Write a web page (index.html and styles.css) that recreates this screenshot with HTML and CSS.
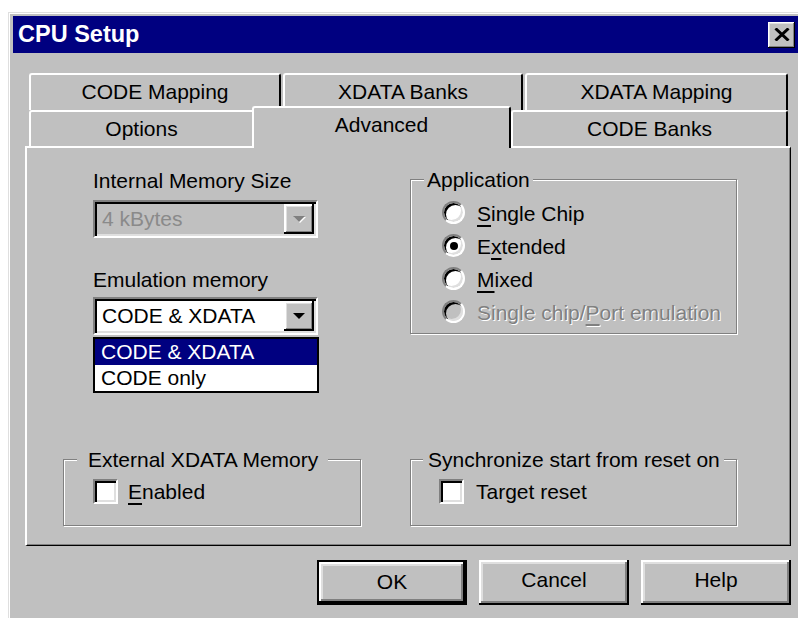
FILE: index.html
```html
<!DOCTYPE html>
<html>
<head>
<meta charset="utf-8">
<title>CPU Setup</title>
<link rel="stylesheet" href="styles.css">
</head>
<body>
<div class="dialog">
  <div class="titlebar">
    <span class="title">CPU Setup</span>
    <button class="close-btn" type="button" aria-label="Close">
      <svg width="16" height="13" viewBox="0 0 16 13"><path d="M1.5 0.5 L14.5 12.5 M14.5 0.5 L1.5 12.5" stroke="#000" stroke-width="3" fill="none"/></svg>
    </button>
  </div>

  <div class="tabs">
    <div class="tab-row back">
      <div class="tab tab-code-map">CODE Mapping</div>
      <div class="tab tab-xdata-banks">XDATA Banks</div>
      <div class="tab tab-xdata-map">XDATA Mapping</div>
    </div>
    <div class="tab-row front">
      <div class="tab tab-options">Options</div>
      <div class="tab tab-advanced active">Advanced</div>
      <div class="tab tab-code-banks">CODE Banks</div>
    </div>
  </div>

  <div class="panel">
    <div class="panel-row top">
      <div class="memory-col">
        <div class="field-label">Internal Memory Size</div>
        <div class="combo disabled">
          <span class="combo-value">4 kBytes</span>
          <span class="combo-btn"><span class="arrow"></span></span>
        </div>
        <div class="field-label second">Emulation memory</div>
        <div class="combo open">
          <span class="combo-value">CODE &amp; XDATA</span>
          <span class="combo-btn"><span class="arrow"></span></span>
          <ul class="combo-list">
            <li class="selected">CODE &amp; XDATA</li>
            <li>CODE only</li>
          </ul>
        </div>
      </div>

      <div class="group application">
        <div class="group-label">Application</div>
        <div class="option"><span class="radio"></span><span><u>S</u>ingle Chip</span></div>
        <div class="option"><span class="radio checked"></span><span>E<u>x</u>tended</span></div>
        <div class="option"><span class="radio"></span><span><u>M</u>ixed</span></div>
        <div class="option disabled"><span class="radio"></span><span>Single chip/<u>P</u>ort emulation</span></div>
      </div>
    </div>

    <div class="panel-row bottom">
      <div class="group external">
        <div class="group-label">External XDATA Memory</div>
        <div class="check-row"><span class="checkbox"></span><span><u>E</u>nabled</span></div>
      </div>
      <div class="group sync">
        <div class="group-label">Synchronize start from reset on</div>
        <div class="check-row"><span class="checkbox"></span><span>Target reset</span></div>
      </div>
    </div>
  </div>

  <div class="buttons">
    <button class="btn default" type="button">OK</button>
    <button class="btn" type="button">Cancel</button>
    <button class="btn" type="button">Help</button>
  </div>
</div>
</body>
</html>
```
FILE: styles.css
```css
* {
  box-sizing: border-box;
}

html,
body {
  margin: 0;
  padding: 0;
}

body {
  background: #fff;
  padding: 12px 0 0 8px;
  height: 618px;
  overflow: hidden;
  font-family: "Liberation Sans", Arial, sans-serif;
  font-size: 21px;
  color: #000;
}

/* Window frame */
.dialog {
  width: 800px;
  height: 620px;
  background: #c0c0c0;
  border-top: 1px solid #dfdfdf;
  border-left: 1px solid #dfdfdf;
  box-shadow: inset 1px 1px 0 #fff;
  padding: 3px 0 0 4px;
}

.titlebar {
  display: flex;
  align-items: center;
  justify-content: space-between;
  height: 37px;
  background: #000080;
  padding: 0 13px 0 5px;
}

.title {
  color: #fff;
  font-weight: bold;
  font-size: 23.5px;
  line-height: 37px;
}

.close-btn {
  display: flex;
  align-items: center;
  justify-content: center;
  width: 27px;
  height: 26px;
  padding: 0 0 1px 1px;
  border: 0;
  background: #c0c0c0;
  box-shadow: inset -1px -1px 0 #000, inset 1px 1px 0 #fff,
    inset -2px -2px 0 #808080, inset 2px 2px 0 #dfdfdf;
}

/* Tab strip: two rows, the front one holds the selected tab */
.tabs {
  margin: 20px 0 0 16px;
}

.tab-row {
  display: flex;
}

.tab-row.back {
  height: 37px;
}

.tab-row.front {
  height: 36px;
}

.tab {
  height: 37px;
  background: #c0c0c0;
  border-top: 2px solid #fff;
  border-left: 2px solid #fff;
  border-right: 2px solid #000;
  border-radius: 3px 3px 0 0;
  padding-top: 0;
  line-height: 33px;
  text-align: center;
  white-space: nowrap;
}

.front .tab {
  height: 36px;
}

.tab-code-map { width: 252px; }
.tab-xdata-banks { width: 240px; margin-left: 2px; }
.tab-xdata-map { width: 263px; margin-left: 2px; }

.tab-options { width: 223px; border-right: 0; border-top-right-radius: 0; }
.tab-code-banks { width: 277px; }

.front .tab.active {
  width: 259px;
  height: 42px;
  margin-top: -4px;
  position: relative;
  z-index: 1;
}

/* Page area of the tab control */
.panel {
  display: flex;
  flex-direction: column;
  margin-left: 12px;
  width: 766px;
  height: 400px;
  border-top: 2px solid #fff;
  border-left: 2px solid #fff;
  border-right: 1px solid #000;
  border-bottom: 1px solid #000;
  box-shadow: inset -1px -1px 0 #808080;
  padding: 21px 0 19px 36px;
}

.panel-row {
  display: flex;
  align-items: flex-start;
}

.panel-row.bottom {
  margin-top: auto;
}

.memory-col {
  width: 298px;
  padding-left: 30px;
}

.field-label {
  line-height: 24px;
}

.field-label.second {
  margin-top: 30px;
}

/* Drop-down combo boxes */
.combo {
  position: relative;
  display: flex;
  width: 225px;
  height: 38px;
  margin-top: 7px;
  background: #fff;
  border: 2px solid;
  border-color: #808080 #fff #fff #808080;
  box-shadow: inset 2px 2px 0 #000, inset -2px -2px 0 #dfdfdf;
  padding: 2px;
}

.field-label.second + .combo {
  margin-top: 5px;
}

.combo-value {
  flex: 1;
  padding-left: 5px;
  line-height: 30px;
  white-space: nowrap;
}

.combo-btn {
  display: flex;
  align-items: center;
  justify-content: center;
  width: 30px;
  height: 30px;
  background: #c0c0c0;
  box-shadow: inset -2px -2px 0 #000, inset 2px 2px 0 #fff,
    inset -3px -3px 0 #808080, inset 3px 3px 0 #dfdfdf;
}

.arrow {
  width: 0;
  height: 0;
  border-left: 6px solid transparent;
  border-right: 6px solid transparent;
  border-top: 6px solid #000;
}

.combo.disabled {
  background: #c0c0c0;
}

.combo.disabled .combo-value {
  color: #8a8a8a;
}

.combo.disabled .arrow {
  border-top-color: #808080;
  filter: drop-shadow(1px 1px 0 #fff);
}

.combo-list {
  position: absolute;
  left: -2px;
  top: calc(100% + 4px);
  width: 226px;
  margin: 0;
  padding: 0;
  list-style: none;
  background: #fff;
  border: 2px solid #000;
  z-index: 2;
}

.combo-list li {
  height: 26px;
  line-height: 26px;
  padding-left: 6px;
  white-space: nowrap;
}

.combo-list li.selected {
  background: #000080;
  color: #fff;
}

/* Etched group boxes */
.group {
  border: 1px solid #808080;
  box-shadow: inset 1px 1px 0 #fff, 1px 1px 0 #fff;
}

.group-label {
  width: fit-content;
  margin-top: -12px;
  line-height: 24px;
  background: #c0c0c0;
  white-space: nowrap;
}

.application {
  width: 327px;
  margin: 10px 0 0 49px;
  padding-bottom: 4px;
}

.application .group-label {
  margin-left: 13px;
  padding: 0 3px;
}

.external {
  width: 298px;
  padding-bottom: 17px;
}

.external .group-label {
  margin-left: 13px;
  padding: 0 10px 0 11px;
}

.sync {
  width: 327px;
  margin-left: 49px;
  padding-bottom: 17px;
}

.sync .group-label {
  margin-left: 12px;
  padding: 0 4px 0 5px;
}

/* Radio buttons */
.option {
  display: flex;
  align-items: center;
  gap: 12px;
  height: 33px;
  line-height: 33px;
  padding-left: 31px;
  white-space: nowrap;
}

.application .group-label + .option {
  margin-top: 5px;
}

.radio {
  position: relative;
  flex: none;
  width: 23px;
  height: 23px;
  margin-top: -2px;
  border-radius: 50%;
  border: 2px solid;
  border-color: #808080 #fff #fff #808080;
  background: #fff;
  box-shadow: inset 2px 2px 0 #000, inset -2px -2px 0 #dfdfdf;
}

.radio.checked::after {
  content: "";
  position: absolute;
  left: 5.5px;
  top: 5.5px;
  width: 8px;
  height: 8px;
  border-radius: 50%;
  background: #000;
}

.option.disabled {
  color: #808080;
  text-shadow: 1px 1px 0 #fff;
}

.option.disabled .radio {
  background: #c0c0c0;
}

u {
  text-decoration-thickness: 2px;
  text-underline-offset: 4px;
}

/* Check boxes */
.check-row {
  display: flex;
  align-items: center;
  height: 33px;
  line-height: 33px;
  margin-top: 3px;
  white-space: nowrap;
}

.external .check-row {
  padding-left: 29px;
  gap: 10px;
}

.sync .check-row {
  padding-left: 28px;
  gap: 12px;
}

.checkbox {
  flex: none;
  width: 25px;
  height: 25px;
  background: #fff;
  border: 2px solid;
  border-color: #808080 #fff #fff #808080;
  box-shadow: inset 2px 2px 0 #000, inset -2px -2px 0 #dfdfdf;
}

/* Dialog command buttons */
.buttons {
  display: flex;
  justify-content: flex-end;
  gap: 12px;
  width: 766px;
  margin: 14px 0 0 12px;
}

.btn {
  width: 150px;
  height: 45px;
  padding: 0 0 6px;
  border: 0;
  background: #c0c0c0;
  font-family: inherit;
  font-size: 21px;
  line-height: 39px;
  color: #000;
  box-shadow: inset -2px -2px 0 #000, inset 2px 2px 0 #fff,
    inset -4px -4px 0 #808080, inset 4px 4px 0 #dfdfdf;
}

.btn.default {
  border: 2px solid #000;
}
```
